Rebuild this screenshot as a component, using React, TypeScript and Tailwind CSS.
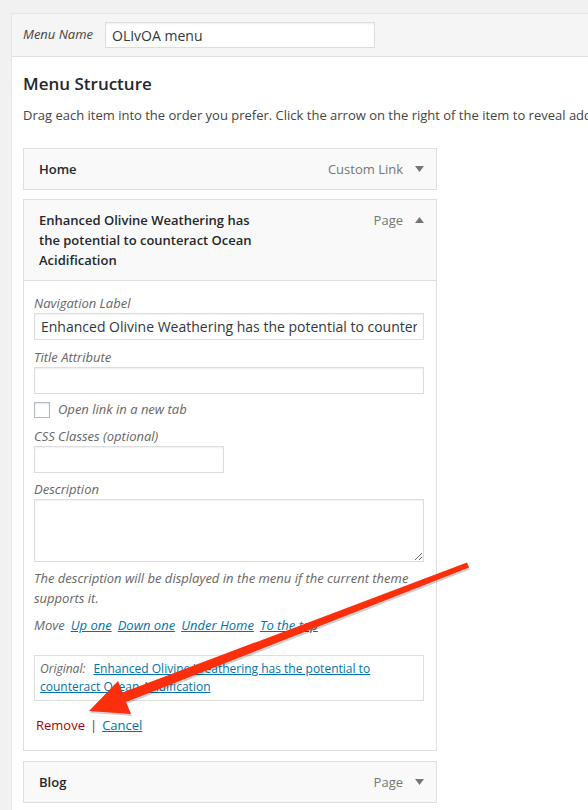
import React from 'react'

function Caret({ up }: { up?: boolean }) {
  return (
    <svg width="9" height="6" viewBox="0 0 9 6" className="shrink-0 fill-[#72777c]">
      {up ? <path d="M0 6 L4.5 0 L9 6 Z" /> : <path d="M0 0 L9 0 L4.5 6 Z" />}
    </svg>
  )
}

function ItemBar({ title, type, up }: { title: string; type: string; up?: boolean }) {
  return (
    <div className="flex items-start justify-between border border-[#dfdfdf] bg-[#f9f9f9] py-[10px] pl-[15px] pr-[12px]">
      <div className="w-[225px] text-[13px] font-semibold leading-5 text-[#23282d]">{title}</div>
      <div className="flex h-5 items-center gap-[12px]">
        <span className="text-[13px] leading-5 text-[#72777c]">{type}</span>
        <Caret up={up} />
      </div>
    </div>
  )
}

const label = 'block text-[13px] italic leading-5 text-[#666]'
const field =
  'block h-[27px] border border-[#ddd] bg-white px-[6px] text-[14px] text-[#32373c] shadow-[inset_0_1px_2px_rgba(0,0,0,0.07)] outline-none'

export default function App() {
  return (
    <div className="relative min-h-[810px] overflow-hidden bg-[#f1f1f1] pl-[11px] pt-[13px] font-['Open_Sans',sans-serif] text-[#444]">
      <div className="min-h-[797px] border-l border-t border-[#e5e5e5] bg-white">
        {/* Menu name header */}
        <div className="flex h-[43px] items-center border-b border-[#dfdfdf] bg-[#f5f5f5] pl-[11px]">
          <span className="text-[13px] italic text-[#444]">Menu Name</span>
          <input
            readOnly
            value="OLIvOA menu"
            className="ml-[12px] h-[26px] w-[270px] border border-[#ddd] bg-white px-[6px] text-[14px] text-[#32373c] shadow-[inset_0_1px_2px_rgba(0,0,0,0.07)] outline-none"
          />
        </div>

        <div className="pl-[11px]">
          <h3 className="mt-[15px] text-[17px] font-semibold leading-6 text-[#23282d]">Menu Structure</h3>
          <p className="mt-[9px] whitespace-nowrap text-[13px] leading-5 text-[#444]">
            Drag each item into the order you prefer. Click the arrow on the right of the item to reveal additional configuration options.
          </p>

          <div className="mt-[23px] w-[414px]">
            <ItemBar title="Home" type="Custom Link" />

            <div className="mt-[9px]">
              <ItemBar
                title="Enhanced Olivine Weathering has the potential to counteract Ocean Acidification"
                type="Page"
                up
              />
              <div className="border border-t-0 border-[#dfdfdf] bg-white px-[10px] pb-[15px] pt-[12px]">
                <span className={label}>Navigation Label</span>
                <input
                  readOnly
                  value="Enhanced Olivine Weathering has the potential to counteract Ocean Acidification"
                  className={`${field} w-[390px]`}
                />

                <span className={`${label} mt-[7px]`}>Title Attribute</span>
                <input readOnly value="" className={`${field} w-[390px]`} />

                <div className="mt-[6px] flex h-5 items-center">
                  <span className="h-[16px] w-[16px] border border-[#b4b9be] bg-white shadow-[inset_0_1px_2px_rgba(0,0,0,0.1)]" />
                  <span className="ml-[8px] text-[13px] italic text-[#666]">Open link in a new tab</span>
                </div>

                <span className={`${label} mt-[6px]`}>CSS Classes (optional)</span>
                <input readOnly value="" className={`${field} w-[190px]`} />

                <span className={`${label} mt-[6px]`}>Description</span>
                <textarea
                  readOnly
                  value=""
                  className="block h-[63px] w-[390px] border border-[#ddd] bg-white shadow-[inset_0_1px_2px_rgba(0,0,0,0.07)] outline-none"
                />
                <p className="mt-[6px] w-[390px] text-[13px] italic leading-5 text-[#666]">
                  The description will be displayed in the menu if the current theme supports it.
                </p>

                <div className="mt-[7px] flex gap-[6px] text-[13px] italic leading-5 text-[#666]">
                  <span>Move</span>
                  <a className="text-[#0073aa] underline">Up one</a>
                  <a className="text-[#0073aa] underline">Down one</a>
                  <a className="text-[#0073aa] underline">Under Home</a>
                  <a className="text-[#0073aa] underline">To the top</a>
                </div>

                <div className="mt-[20px] w-[390px] border border-[#dfdfdf] px-[5px] py-[4px] text-[12px] leading-[18px]">
                  <span className="italic text-[#666]">Original:</span>
                  <a className="ml-[8px] text-[#0073aa] underline">
                    Enhanced Olivine Weathering has the potential to counteract Ocean Acidification
                  </a>
                </div>

                <div className="mt-[14px] flex items-center pl-[2px] text-[13px] leading-5">
                  <a className="text-[#a00]">Remove</a>
                  <span className="mx-[5px] text-[#444]">|</span>
                  <a className="text-[#0073aa] underline">Cancel</a>
                </div>
              </div>
            </div>

            <div className="mt-[10px]">
              <ItemBar title="Blog" type="Page" />
            </div>
          </div>
        </div>
      </div>

      {/* red annotation arrow */}
      <svg
        width="588"
        height="810"
        viewBox="0 0 588 810"
        className="pointer-events-none absolute left-0 top-0"
      >
        <polygon
          points="89,711 131,714 126,702 469,567.5 467,562.5 122.5,692.5 118,681"
          fill="rgba(0,0,0,0.18)"
          transform="translate(1,2)"
        />
        <polygon
          points="89,711 131,714 126,702 469,567.5 467,562.5 122.5,692.5 118,681"
          fill="#fc2f0c"
        />
      </svg>
    </div>
  )
}
